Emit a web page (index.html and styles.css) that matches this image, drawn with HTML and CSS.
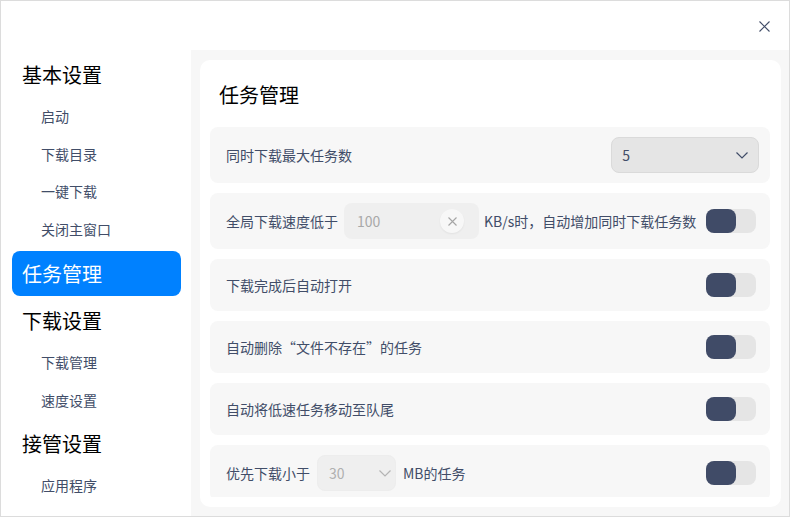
FILE: index.html
```html
<!DOCTYPE html>
<html lang="zh-CN">
<head>
<meta charset="utf-8">
<title>设置</title>
<link rel="stylesheet" href="styles.css">
</head>
<body>
<div class="window">
  <div class="titlebar">
    <button class="close" aria-label="关闭">
      <svg width="11" height="11" viewBox="0 0 11 11"><path d="M0.5 0.5L10.5 10.5M10.5 0.5L0.5 10.5" stroke="#414d68" stroke-width="1.1" fill="none"/></svg>
    </button>
  </div>
  <div class="body">
    <nav class="sidebar">
      <div class="nav-head">基本设置</div>
      <div class="nav-subs">
        <div class="nav-item">启动</div>
        <div class="nav-item">下载目录</div>
        <div class="nav-item">一键下载</div>
        <div class="nav-item">关闭主窗口</div>
      </div>
      <div class="nav-head active">任务管理</div>
      <div class="nav-head">下载设置</div>
      <div class="nav-subs">
        <div class="nav-item">下载管理</div>
        <div class="nav-item">速度设置</div>
      </div>
      <div class="nav-head">接管设置</div>
      <div class="nav-subs">
        <div class="nav-item">应用程序</div>
      </div>
    </nav>
    <main class="content">
      <section class="card">
        <h1 class="card-title">任务管理</h1>
        <div class="rows">
          <div class="row tall">
            <span class="label">同时下载最大任务数</span>
            <div class="select">
              <span>5</span>
              <svg class="chev" width="12" height="7" viewBox="0 0 12 7"><path d="M0.5 0.5L6 6L11.5 0.5" stroke="#414d68" stroke-width="1.2" fill="none"/></svg>
            </div>
          </div>
          <div class="row tall">
            <span class="label">全局下载速度低于</span>
            <div class="input">
              <span class="input-text">100</span>
              <span class="clear">
                <svg width="9" height="9" viewBox="0 0 9 9"><path d="M0.5 0.5L8.5 8.5M8.5 0.5L0.5 8.5" stroke="#a5a5a5" stroke-width="1.1" fill="none"/></svg>
              </span>
            </div>
            <span class="label after">KB/s时，自动增加同时下载任务数</span>
            <span class="switch"><span class="knob"></span></span>
          </div>
          <div class="row">
            <span class="label">下载完成后自动打开</span>
            <span class="switch"><span class="knob"></span></span>
          </div>
          <div class="row">
            <span class="label">自动删除“文件不存在”的任务</span>
            <span class="switch"><span class="knob"></span></span>
          </div>
          <div class="row">
            <span class="label">自动将低速任务移动至队尾</span>
            <span class="switch"><span class="knob"></span></span>
          </div>
          <div class="row tall">
            <span class="label">优先下载小于</span>
            <div class="select small disabled">
              <span>30</span>
              <svg class="chev" width="12" height="7" viewBox="0 0 12 7"><path d="M0.5 0.5L6 6L11.5 0.5" stroke="#b4b4b4" stroke-width="1.2" fill="none"/></svg>
            </div>
            <span class="label after2">MB的任务</span>
            <span class="switch"><span class="knob"></span></span>
          </div>
        </div>
      </section>
    </main>
  </div>
</div>
</body>
</html>
```

FILE: styles.css
```css
* { box-sizing: border-box; }
html, body { margin: 0; padding: 0; }
body {
  font-family: "Noto Sans CJK SC", "Noto Sans", sans-serif;
  background: #ffffff;
}
.window {
  width: 790px;
  height: 517px;
  border: 1px solid #dcdcdc;
  background: #ffffff;
  display: flex;
  flex-direction: column;
  overflow: hidden;
}
.titlebar {
  height: 49px;
  flex-shrink: 0;
  display: flex;
  justify-content: flex-end;
  align-items: flex-start;
  padding: 20px 19px 0 0;
}
.close {
  border: 0;
  background: transparent;
  padding: 0;
  width: 11px;
  height: 11px;
  display: block;
}
.close svg { display: block; }
.body {
  flex: 1;
  display: flex;
  min-height: 0;
}
.sidebar {
  width: 190px;
  flex-shrink: 0;
  background: #ffffff;
  padding: 2px 10px 0 11px;
}
.nav-head {
  height: 45px;
  line-height: 45px;
  padding-left: 10px;
  font-size: 20px;
  color: #000000;
  border-radius: 8px;
  margin-bottom: 1px;
}
.nav-head.active {
  background: #0081ff;
  color: #ffffff;
  margin-top: 3px;
  margin-bottom: 2px;
}
.nav-subs { margin-bottom: 2px; }
.nav-item {
  height: 37.5px;
  line-height: 37.5px;
  padding-left: 29px;
  font-size: 14px;
  color: #414d68;
}
.content {
  flex: 1;
  background: #f7f7f7;
  padding: 10px 9px 9px 9px;
  display: flex;
}
.card {
  flex: 1;
  background: #ffffff;
  border-radius: 10px;
  padding: 0 11px 10px 10px;
  display: flex;
  flex-direction: column;
  min-height: 0;
}
.card-title {
  margin: 20px 0 17px 0;
  padding-left: 9px;
  font-size: 20px;
  font-weight: normal;
  line-height: 30px;
  color: #000000;
}
.rows {
  flex: 1;
  min-height: 0;
  overflow: hidden;
  display: flex;
  flex-direction: column;
  gap: 10px;
}
.row {
  flex-shrink: 0;
  height: 52px;
  background: #f7f7f7;
  border-radius: 8px;
  display: flex;
  align-items: center;
  padding: 0 11px 0 16px;
}
.row.tall { height: 56px; }
.label {
  font-size: 14px;
  color: #414d68;
  white-space: nowrap;
}
.label.after { margin-left: 5px; }
.label.after2 { margin-left: 7px; }
.select {
  margin-left: auto;
  width: 148px;
  height: 36px;
  background: #e5e5e5;
  border: 1px solid #dadada;
  border-radius: 8px;
  display: flex;
  align-items: center;
  justify-content: space-between;
  padding: 0 10px 0 10px;
  font-size: 14px;
  color: #414d68;
}
.select.small {
  margin-left: 7px;
  width: 79px;
  background: #efefef;
  border-color: #ededed;
  color: #b0b0b0;
  padding: 0 4px 0 11px;
}
.input {
  margin-left: 6px;
  width: 135px;
  height: 36px;
  background: #efefef;
  border-radius: 8px;
  display: flex;
  align-items: center;
  justify-content: space-between;
  padding: 0 15px 0 13px;
  font-size: 14px;
  color: #a8a8a8;
}
.clear {
  width: 24px;
  height: 24px;
  border-radius: 50%;
  background: #f7f7f7;
  box-shadow: 0 1px 2px rgba(0,0,0,0.06);
  display: flex;
  align-items: center;
  justify-content: center;
}
.clear svg { display: block; }
.switch {
  margin-left: auto;
  margin-right: 3px;
  width: 50px;
  height: 24px;
  background: #e5e5e5;
  border-radius: 8px;
  flex-shrink: 0;
  display: flex;
}
.label.after + .switch { margin-left: 10px; }
.knob {
  width: 30px;
  height: 24px;
  background: #404b67;
  border-radius: 8px;
}
```
